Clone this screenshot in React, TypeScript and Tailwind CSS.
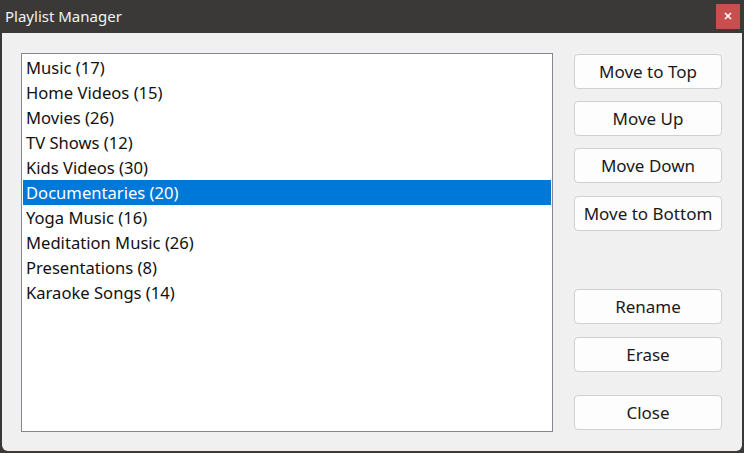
const playlists = [
  'Music (17)',
  'Home Videos (15)',
  'Movies (26)',
  'TV Shows (12)',
  'Kids Videos (30)',
  'Documentaries (20)',
  'Yoga Music (16)',
  'Meditation Music (26)',
  'Presentations (8)',
  'Karaoke Songs (14)',
];

const selected = 5;

function DialogButton({ label, className = '' }: { label: string; className?: string }) {
  return (
    <button
      className={`h-[35px] w-[148px] rounded-[4px] border border-[#d0d0d0] bg-[#fdfdfd] text-[17px] text-[#1a1a1a] ${className}`}
    >
      {label}
    </button>
  );
}

export default function App() {
  return (
    <div
      className="flex h-[453px] w-[744px] flex-col overflow-hidden bg-[#3a3938]"
      style={{ fontFamily: '"Noto Sans", "Open Sans", sans-serif' }}
    >
      <div className="flex h-[33px] items-center justify-between pl-[5px] pr-[4px]">
        <span className="text-[15px] text-[#f2f2f2]">Playlist Manager</span>
        <button className="mb-[1px] flex h-[25px] w-[24px] items-center justify-center bg-[#c94f4f]">
          <svg width="8" height="8" viewBox="0 0 8 8">
            <path d="M1 1 L7 7 M7 1 L1 7" stroke="#ffffff" strokeWidth="1.6" />
          </svg>
        </button>
      </div>

      <div className="mx-[2px] mb-[2px] flex flex-1 gap-[21px] rounded-b-[6px] bg-[#f0f0f0] pb-[19px] pl-[19px] pt-[20px]">
        <div className="w-[532px] border border-[#828790] bg-white px-[1px] pt-[1px]">
          {playlists.map((name, i) => (
            <div
              key={name}
              className={`h-[25px] pl-[3px] text-[16.6px] leading-[25px] ${
                i === selected ? 'bg-[#0078d7] text-white' : 'text-[#111111]'
              }`}
            >
              {name}
            </div>
          ))}
        </div>

        <div className="flex flex-col pt-[1px]">
          <DialogButton label="Move to Top" />
          <DialogButton label="Move Up" className="mt-[12px]" />
          <DialogButton label="Move Down" className="mt-[12px]" />
          <DialogButton label="Move to Bottom" className="mt-[13px]" />
          <DialogButton label="Rename" className="mt-[58px]" />
          <DialogButton label="Erase" className="mt-[13px]" />
          <DialogButton label="Close" className="mt-[23px]" />
        </div>
      </div>
    </div>
  );
}
